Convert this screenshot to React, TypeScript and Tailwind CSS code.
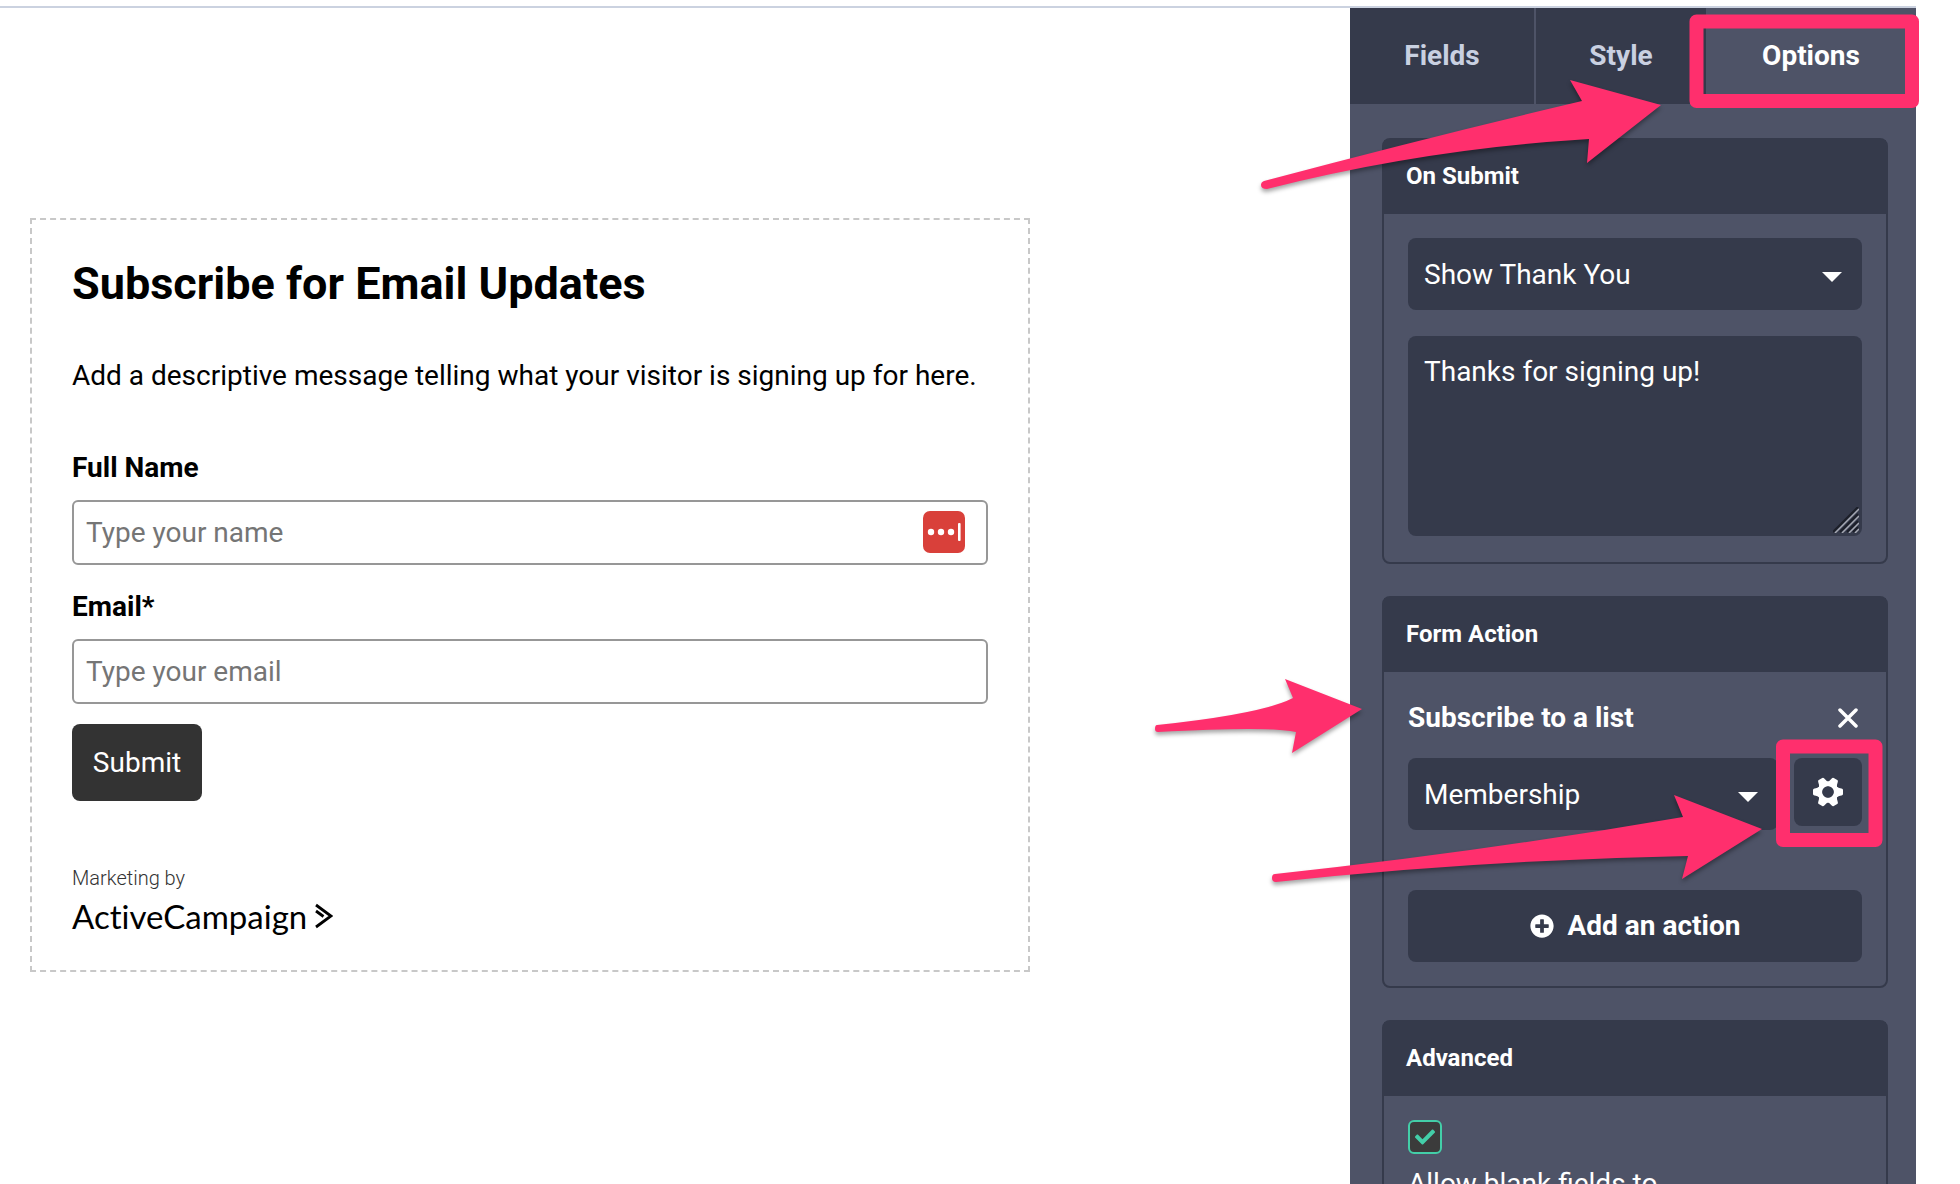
import React from 'react';
import { FaCheck, FaPlusCircle } from 'react-icons/fa';

const Panel: React.FC<{ title: string; children: React.ReactNode }> = ({ title, children }) => (
  <section className="rounded-lg border-2 border-[#353a4b] bg-[#4e5367]">
    <h2 className="bg-[#353a4b] h-[74px] px-[22px] pb-0.5 flex items-center text-2xl font-bold">{title}</h2>
    <div className="px-6 py-6">{children}</div>
  </section>
);

const Select: React.FC<{ label: string; value: string }> = ({ label, value }) => (
  <div className="relative flex-1">
    <select
      aria-label={label}
      className="appearance-none w-full h-[72px] rounded-lg bg-[#353a4b] pl-4 pr-14 pt-0.5 text-[28px]"
    >
      <option>{value}</option>
    </select>
    <svg className="absolute right-5 top-[34px] w-5 h-[10px]" viewBox="0 0 20 10" aria-hidden="true">
      <path d="M0 0h20L10 10z" fill="#fff" />
    </svg>
  </div>
);

const GearIcon: React.FC = () => (
  <svg className="w-[30px] h-[30px]" viewBox="-15 -15 30 30" aria-hidden="true">
    <g fill="#fff">
      {[0, 60, 120, 180, 240, 300].map((angle) => (
        <path key={angle} transform={`rotate(${angle})`} d="M7 -6.500Q11 -3.500 13.500 -3.500Q15 -3.300 15 -2V2Q15 3.300 13.500 3.500Q11 3.500 7 6.500Z" />
      ))}
    </g>
    <circle r="8" fill="none" stroke="#fff" strokeWidth="5" />
    <circle r="5.800" fill="#353a4b" />
  </svg>
);

const Annotations: React.FC = () => (
  <svg
    className="absolute right-0 top-0 w-[820px] h-[1184px] pointer-events-none drop-shadow-[0_3px_2px_rgba(0,0,0,0.35)]"
    viewBox="1140 0 820 1184"
    fill="#ff2f6d"
    aria-hidden="true"
  >
    <path d="M1264 181Q1425 138 1582 101L1570 80L1661 105L1587 163L1589 139Q1425 149 1267 189Q1261 189 1261 185Q1261 182 1264 181Z" />
    <path d="M1157 725Q1262 714 1293 698L1285 679L1362 709L1292 753L1296 732Q1270 726 1158 732Q1155 732 1155 729Q1155 725 1157 725Z" />
    <path d="M1275 874Q1480 852 1683 817L1674 795L1762 829L1682 879L1688 856Q1480 860 1276 882Q1272 882 1272 878Q1272 874 1275 874Z" />
  </svg>
);

const Highlights: React.FC = () => (
  <svg
    className="absolute right-0 top-0 w-[820px] h-[1184px] pointer-events-none"
    viewBox="1140 0 820 1184"
    fill="none"
    stroke="#ff2f6d"
    strokeWidth="14"
    strokeLinejoin="round"
    aria-hidden="true"
  >
    <path d="M1696.500 21.500H1912V101H1696.500Z" />
    <path d="M1783 746.500H1875.500V840H1783Z" />
  </svg>
);

const FormPreview: React.FC = () => (
  <form className="w-[1000px] ml-[30px] mt-[210px] self-start border-2 border-dashed border-[#c8c8c8] px-10 pt-9 pb-[34px] text-black text-[28px] leading-9">
    <h1 className="text-[45px] leading-[56px] font-bold">Subscribe for Email Updates</h1>
    <p className="mt-[46px] whitespace-nowrap">Add a descriptive message telling what your visitor is signing up for here.</p>
    <label htmlFor="name" className="block mt-14 font-bold">Full Name</label>
    <div className="relative mt-[14px]">
      <input
        id="name"
        type="text"
        placeholder="Type your name"
        className="block w-full h-[65px] rounded-md border-2 border-[#979797] px-3 placeholder:text-[#757575]"
      />
      <svg className="absolute right-[23px] top-[11px] w-[42px] h-[42px]" viewBox="0 0 42 42" aria-hidden="true">
        <rect width="42" height="42" rx="7" fill="#d9403a" />
        <circle cx="8" cy="21" r="3.200" fill="#fff" />
        <circle cx="18" cy="21" r="3.200" fill="#fff" />
        <circle cx="28" cy="21" r="3.200" fill="#fff" />
        <rect x="35" y="12" width="2.600" height="18" rx="1" fill="#fff" />
      </svg>
    </div>
    <label htmlFor="email" className="block mt-6 font-bold">Email*</label>
    <input
      id="email"
      type="email"
      placeholder="Type your email"
      className="block w-full h-[65px] mt-[14px] rounded-md border-2 border-[#979797] px-3 placeholder:text-[#757575]"
    />
    <button type="button" className="block mt-5 w-[130px] h-[77px] rounded-lg bg-[#333] text-white">Submit</button>
    <div className="mt-[63px] text-xl leading-7 font-light text-[#333]">Marketing by</div>
    <a href="#" className="flex items-center gap-2 mt-1 text-[33px] leading-10 font-['Lato',sans-serif] [font-variant-ligatures:none]">
      ActiveCampaign
      <svg className="w-[18px] h-[26px]" viewBox="0 0 18 26" fill="none" stroke="#000" strokeWidth="2.800" aria-hidden="true">
        <path d="M1 2L16 13L1 24M1 8L8.500 13.500" />
      </svg>
    </a>
  </form>
);

const App: React.FC = () => (
  <div className="relative h-screen overflow-hidden bg-white pt-[6px] font-['Roboto',sans-serif]">
    <div className="mr-11 border-t-2 border-[#cbd2e0] flex h-full">
      <main className="flex-1 flex">
        <FormPreview />
      </main>
      <aside className="w-[566px] shrink-0 bg-[#4e5367] text-white overflow-hidden">
        <nav className="flex h-24 bg-[#353a4b] text-[28px] font-bold text-[#c9d0e1]">
          <button type="button" className="w-[186px] border-r-2 border-[#4e5367]">Fields</button>
          <button type="button" className="w-[170px]">Style</button>
          <button type="button" className="flex-1 bg-[#4e5367] text-white">Options</button>
        </nav>
        <div className="flex flex-col gap-8 pt-[34px] pl-8 pr-7">
          <Panel title="On Submit">
            <div className="flex">
              <Select label="On submit" value="Show Thank You" />
            </div>
            <div className="relative mt-[26px] mb-0.5">
              <textarea
                aria-label="Thank you message"
                defaultValue="Thanks for signing up!"
                className="block w-full h-[200px] resize-none rounded-lg bg-[#353a4b] px-4 py-[18px] text-[28px] leading-9"
              />
              <svg className="absolute right-[3px] bottom-[3px] w-[26px] h-[26px] pointer-events-none" viewBox="0 0 26 26" fill="none" strokeWidth="1.500" aria-hidden="true">
                <path d="M0 25L25 0M7 25L25 7M14 25L25 14M20 25L25 20" stroke="#1c1f29" strokeWidth="2" />
                <path d="M2 26L26 2M9 26L26 9M16 26L26 16M22 26L26 22" stroke="#a5a8b2" />
              </svg>
            </div>
          </Panel>
          <Panel title="Form Action">
            <div className="flex items-center justify-between h-11 text-[28px] font-bold">
              <h3>Subscribe to a list</h3>
              <button type="button" aria-label="Remove action" className="p-1">
                <svg className="w-5 h-5" viewBox="0 0 20 20" stroke="#fff" strokeWidth="3.500" strokeLinecap="round" aria-hidden="true">
                  <path d="M2 2L18 18M18 2L2 18" />
                </svg>
              </button>
            </div>
            <div className="flex gap-4 mt-[18px]">
              <Select label="List" value="Membership" />
              <button type="button" aria-label="List settings" className="flex items-center justify-center w-[68px] h-[68px] rounded-lg bg-[#353a4b]">
                <GearIcon />
              </button>
            </div>
            <button type="button" className="flex items-center justify-center gap-[14px] w-full h-[72px] mt-[60px] rounded-lg bg-[#353a4b] text-[28px] font-bold">
              <FaPlusCircle className="w-6 h-6" />
              Add an action
            </button>
          </Panel>
          <Panel title="Advanced">
            <label className="block text-[28px] leading-9">
              <span className="relative block w-[34px] h-[34px] mb-3">
                <input type="checkbox" defaultChecked className="block appearance-none w-full h-full rounded-md border-2 border-[#43cea8] bg-[#3b3b3b]" />
                <FaCheck className="absolute left-[7px] top-[7px] w-5 h-5 text-[#43cea8]" />
              </span>
              Allow blank fields to
            </label>
          </Panel>
        </div>
      </aside>
    </div>
    <Annotations />
    <Highlights />
  </div>
);

export default App;
